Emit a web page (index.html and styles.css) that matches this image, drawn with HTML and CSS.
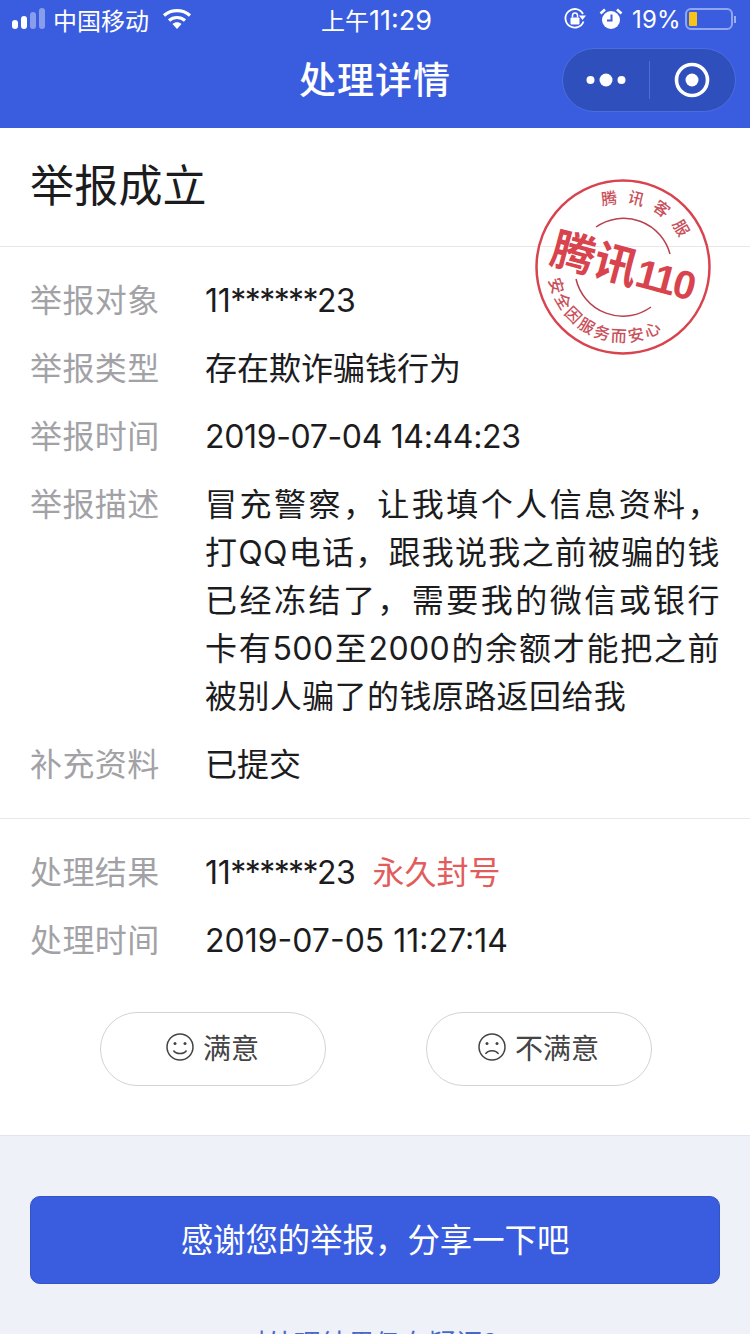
FILE: index.html
```html
<!DOCTYPE html>
<html>
<head>
<meta charset="utf-8" />
<title>处理详情</title>
<link rel="stylesheet" href="styles.css">
</head>
<body>
<div class="page">
  <div class="top">
    <div class="status">
      <div class="status_left">
        <svg class="signal" width="34" height="24" viewBox="0 0 34 24">
          <rect x="0" y="13" width="6" height="9" rx="3" fill="#fff"/>
          <rect x="9" y="9" width="6" height="13" rx="3" fill="#fff"/>
          <rect x="18" y="5" width="6" height="17" rx="3" fill="#fff" opacity=".4"/>
          <rect x="27" y="1" width="6" height="21" rx="3" fill="#fff" opacity=".4"/>
        </svg>
        <span>中国移动</span>
        <svg class="wifi" width="30" height="22" viewBox="0 0 30 22">
          <path d="M2 7.5C9.500 1 20.500 1 28 7.500" fill="none" stroke="#fff" stroke-width="3.200"/>
          <path d="M7 12.500C11.500 8.500 18.500 8.500 23 12.500" fill="none" stroke="#fff" stroke-width="3.200"/>
          <path d="M10.500 16C13 13.700 17 13.700 19.500 16L15 21z" fill="#fff"/>
        </svg>
      </div>
      <div class="status_time">上午<span class="clock">11:29</span></div>
      <div class="status_right">
        <svg width="24" height="24" viewBox="0 0 24 24">
          <path d="M20.500 14.500A9.300 9.300 0 1 1 20 7" fill="none" stroke="#fff" stroke-width="1.800"/>
          <path d="M23 8.500L19.500 13 16 8.500z" fill="#fff"/>
          <rect x="7.500" y="10.500" width="9" height="7" rx="1" fill="#fff"/>
          <path d="M9.500 10.500V8.500a2.500 2.500 0 0 1 5 0v2" fill="none" stroke="#fff" stroke-width="1.500"/>
        </svg>
        <svg class="alarm" width="24" height="24" viewBox="0 0 24 24">
          <circle cx="12" cy="13" r="9" fill="#fff"/>
          <path d="M12.500 7.500V13.500H8" fill="none" stroke="#3a5de0" stroke-width="2"/>
          <path d="M1.500 6.500L6 2.500M22.500 6.500L18 2.500" stroke="#fff" stroke-width="2.600" fill="none"/>
        </svg>
        <span class="percent">19%</span>
        <div class="battery"><div class="battery_fill"></div></div>
        <div class="battery_tip"></div>
      </div>
    </div>
    <div class="nav">
      <div></div>
      <div class="nav_title">处理详情</div>
      <div class="capsule">
        <div class="capsule_part">
          <svg width="40" height="14" viewBox="0 0 40 14">
            <circle cx="4.500" cy="7" r="4" fill="#fff"/>
            <circle cx="20" cy="7" r="6.500" fill="#fff"/>
            <circle cx="35.500" cy="7" r="4" fill="#fff"/>
          </svg>
        </div>
        <div class="capsule_line"></div>
        <div class="capsule_part">
          <svg width="36" height="36" viewBox="0 0 36 36">
            <circle cx="18" cy="18" r="15.500" fill="none" stroke="#fff" stroke-width="3.600"/>
            <circle cx="18" cy="18" r="6.500" fill="#fff"/>
          </svg>
        </div>
      </div>
    </div>
  </div>

  <div class="main">
    <div class="head">举报成立</div>

    <svg class="stamp" width="190" height="190" viewBox="0 0 190 190">
      <defs>
        <path id="arc_top" d="M74.200 34.500A64 64 0 0 1 158 84"/>
        <path id="arc_bottom" d="M21.100 107.600A75 75 0 0 0 148 148"/>
      </defs>
      <circle cx="95" cy="95" r="86.500" fill="none" stroke="#d8434e" stroke-width="2.500"/>
      <path d="M68 55A48 48 0 0 1 142 82" fill="none" stroke="#b9414f" stroke-width="1.500"/>
      <path d="M48 107A48 48 0 0 0 123 135" fill="none" stroke="#b9414f" stroke-width="1.500"/>
      <text class="stamp_small"><textPath href="#arc_top">腾讯客服</textPath></text>
      <text class="stamp_bottom"><textPath href="#arc_bottom">安全因服务而安心</textPath></text>
      <text class="stamp_big" x="95" y="110" transform="rotate(15 95 95)" text-anchor="middle">腾讯<tspan class="stamp_num">110</tspan></text>
    </svg>

    <div class="info">
      <div class="row"><div class="label">举报对象</div><div class="value"><span class="num">11<span class="mask">******</span>23</span></div></div>
      <div class="row"><div class="label">举报类型</div><div class="value">存在欺诈骗钱行为</div></div>
      <div class="row"><div class="label">举报时间</div><div class="value"><span class="num">2019-07-04 14:44:23</span></div></div>
      <div class="row"><div class="label">举报描述</div><div class="value desc">冒充警察，让我填个人信息资料，打QQ电话，跟我说我之前被骗的钱已经冻结了，需要我的微信或银行卡有500至2000的余额才能把之前被别人骗了的钱原路返回给我</div></div>
      <div class="row"><div class="label">补充资料</div><div class="value">已提交</div></div>
    </div>

    <div class="info info_result">
      <div class="row"><div class="label">处理结果</div><div class="value"><span class="num">11<span class="mask">******</span>23</span><span class="ban">永久封号</span></div></div>
      <div class="row"><div class="label">处理时间</div><div class="value"><span class="num_wide">2019-07-05 11:27:14</span></div></div>
    </div>

    <div class="rate">
      <div class="rate_btn">
        <svg width="30" height="30" viewBox="0 0 30 30">
          <circle cx="15" cy="15" r="13" fill="none" stroke="#444" stroke-width="1.500"/>
          <circle cx="10" cy="11.500" r="1.500" fill="#444"/>
          <circle cx="20" cy="11.500" r="1.500" fill="#444"/>
          <path d="M8.500 18.500C11 22.500 19 22.500 21.500 18.500" fill="none" stroke="#444" stroke-width="1.500"/>
        </svg>
        <span>满意</span>
      </div>
      <div class="rate_btn">
        <svg width="30" height="30" viewBox="0 0 30 30">
          <circle cx="15" cy="15" r="13" fill="none" stroke="#444" stroke-width="1.500"/>
          <circle cx="10" cy="11.500" r="1.500" fill="#444"/>
          <circle cx="20" cy="11.500" r="1.500" fill="#444"/>
          <path d="M8.500 22C11 17.500 19 17.500 21.500 22" fill="none" stroke="#444" stroke-width="1.500"/>
        </svg>
        <span>不满意</span>
      </div>
    </div>
  </div>

  <div class="foot">
    <div class="share">感谢您的举报，分享一下吧</div>
    <div class="doubt">对处理结果仍有疑问？</div>
  </div>
</div>
</body>
</html>
```

FILE: styles.css
```css
* { box-sizing: border-box; }
html, body { margin: 0; padding: 0; }
body { background: #eff1f9; color: #1c1c1e; font-family: Inter, "Noto Sans CJK SC", sans-serif; }

.page { width: 750px; height: 1334px; overflow: hidden; position: relative; }

.top { height: 128px; background: #3a5de0; color: #fff; }

.status { height: 40px; display: grid; grid-template-columns: 1fr auto 1fr; align-items: center; padding: 0 14px 2px 12px; font-size: 24px; }
.status_left { display: flex; align-items: center; }
.status_left span { margin-left: 7px; }
.wifi { margin-left: 13px; }
.status_time { margin-left: 5px; }
.clock { font-size: 27px; }
.status_right { display: flex; align-items: center; justify-content: flex-end; }
.alarm { margin-left: 12px; }
.percent { margin-left: 9px; letter-spacing: .3px; }
.battery { width: 48px; height: 22px; margin-left: 4px; padding: 2px; border: 2px solid rgba(255,255,255,.45); border-radius: 6px; }
.battery_fill { width: 8px; height: 100%; background: #f7c21a; border-radius: 1px; }
.battery_tip { width: 2px; height: 7px; margin-left: 1px; background: rgba(255,255,255,.5); }

.nav { height: 80px; display: grid; grid-template-columns: 1fr auto 1fr; align-items: center; padding: 0 14px; }
.nav_title { margin-bottom: 5px; font-size: 37px; font-weight: 500; letter-spacing: 1px; }
.capsule { justify-self: end; width: 174px; height: 64px; display: flex; align-items: center; background: #2f4fbd; border: 1px solid #4c6de0; border-radius: 32px; }
.capsule_part { flex: 1; display: flex; align-items: center; justify-content: center; }
.capsule_line { width: 1px; height: 38px; background: #4c6de0; }

.main { position: relative; height: 1008px; background: #fff; border-bottom: 1px solid #e3e5ee; }

.head { height: 119px; padding: 28px 0 0 30px; font-size: 44px; letter-spacing: .2px; line-height: 60px; border-bottom: 1px solid #e8e8e8; }

.stamp { position: absolute; left: 528px; top: 44px; }
.stamp_small, .stamp_bottom { fill: #c8505a; font-size: 16px; font-weight: 500; font-family: "Noto Sans CJK SC", sans-serif; }
.stamp_small { letter-spacing: 9px; }
.stamp_bottom { letter-spacing: 2.500px; }
.stamp_big { fill: #d8434e; font-size: 44px; font-weight: 700; font-family: "Noto Sans CJK SC", sans-serif; }
.stamp_num { font-size: 40px; font-weight: 700; font-family: "Liberation Sans", sans-serif; letter-spacing: -2px; }

.info { padding: 30px 30px 29px; display: flex; flex-direction: column; gap: 20px; border-bottom: 1px solid #e8e8e8; }
.info_result { padding-bottom: 0; border-bottom: 0; }

.row { display: flex; font-size: 32px; line-height: 48px; }
.label { width: 175px; flex: none; color: #a2a2a6; letter-spacing: .4px; }
.value { flex: 1; }
.desc { letter-spacing: .4px; text-align: justify; }
.num { letter-spacing: -.35px; }
.mask { letter-spacing: -1.600px; }
.ban { margin-left: 17px; color: #e25c5c; }

.rate { display: flex; gap: 100px; margin-top: 47px; padding-left: 100px; }
.rate_btn { width: 226px; height: 74px; padding: 0 2px 4px 0; display: flex; align-items: center; justify-content: center; gap: 8px; border: 1px solid #d9cfdb; border-radius: 37px; font-size: 28px; color: #444; }

.foot { padding: 60px 30px 0; text-align: center; }
.share { height: 88px; line-height: 88px; background: #3a5de0; border: 1px solid #3354c4; border-radius: 10px; color: #fff; font-size: 32.400px; }
.doubt { margin-top: 39px; font-size: 27px; color: #4768c8; }
```
